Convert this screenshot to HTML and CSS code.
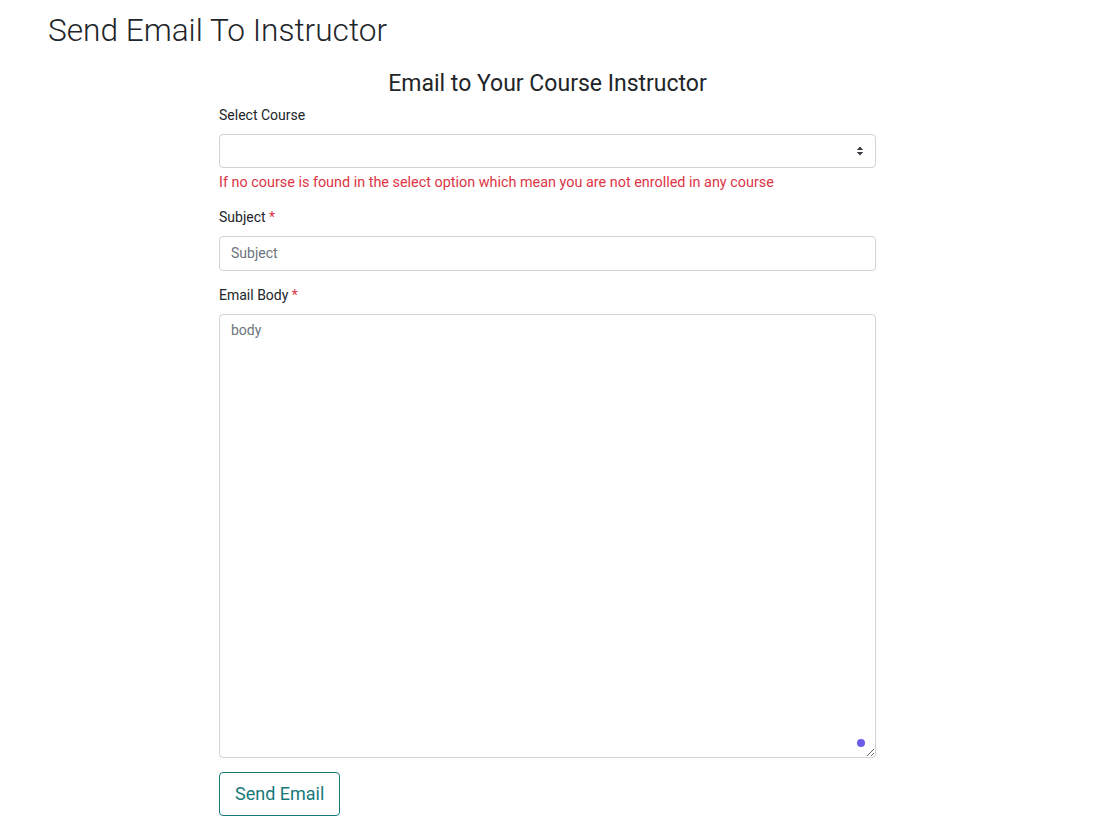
FILE: index.html
```html
<!DOCTYPE html>
<html lang="en">
<head>
<meta charset="utf-8">
<title>Send Email To Instructor</title>
<link rel="stylesheet" href="styles.css">
</head>
<body>
<div class="page">
  <h1 class="page-title">Send Email To Instructor</h1>
  <form class="email-form">
    <h2 class="form-title">Email to Your Course Instructor</h2>
    <div class="form-group form-group-course">
      <label class="form-label">Select Course</label>
      <div class="select-wrap">
        <select class="form-control select"></select>
        <svg class="select-arrow" width="8" height="10" viewBox="0 0 8 10"><path d="M4 0.5 L7.2 4 L0.8 4 Z M4 9.5 L7.2 6 L0.8 6 Z" fill="#343a40"/></svg>
      </div>
      <div class="error-text">If no course is found in the select option which mean you are not enrolled in any course</div>
    </div>
    <div class="form-group">
      <label class="form-label">Subject <span class="req">*</span></label>
      <input class="form-control" type="text" placeholder="Subject">
    </div>
    <div class="form-group">
      <label class="form-label">Email Body <span class="req">*</span></label>
      <div class="textarea-wrap">
        <textarea class="form-control textarea" placeholder="body"></textarea>
        <span class="ext-dot"></span>
      </div>
    </div>
    <button type="button" class="btn-send">Send Email</button>
  </form>
</div>
</body>
</html>
```

FILE: styles.css
```css
* { box-sizing: border-box; }
html, body { margin: 0; padding: 0; background: #fff; }
body {
  font-family: Roboto, "Noto Sans", "Liberation Sans", sans-serif;
  color: #212529;
  font-size: 14px;
  line-height: 1.5;
}
.page { padding: 12px 48px 0; }
.page-title {
  margin: 0;
  font-size: 31.6px;
  font-weight: 300;
  line-height: 1.2;
}
.email-form {
  width: 657px;
  margin: 20px 0 0 171px;
  display: flex;
  flex-direction: column;
}
.form-title {
  margin: 0 0 7px;
  font-size: 23px;
  font-weight: 400;
  line-height: 1.2;
  text-align: center;
}
.form-group {
  display: flex;
  flex-direction: column;
  margin-bottom: 14px;
}
.form-group-course { margin-bottom: 13px; }
.form-label {
  display: block;
  margin-bottom: 8px;
  font-size: 14px;
  line-height: 21px;
}
.req { color: #dc3545; }
.form-control {
  display: block;
  width: 100%;
  height: 35px;
  padding: 6px 11px;
  font-family: inherit;
  font-size: 14px;
  line-height: 21px;
  color: #495057;
  background: #fff;
  border: 1px solid #ced4da;
  border-radius: 4px;
  outline: none;
}
.form-control::placeholder { color: #6c757d; opacity: 1; }
.select-wrap { position: relative; }
.select {
  appearance: none;
  -webkit-appearance: none;
  height: 34px;
}
.select-arrow {
  position: absolute;
  right: 12px;
  top: 12px;
  pointer-events: none;
}
.error-text {
  margin-top: 4px;
  color: #dc3545;
  font-size: 14.4px;
  line-height: 22px;
}
.textarea-wrap { position: relative; }
.textarea {
  height: 444px;
  resize: vertical;
  padding-top: 5px;
}
.ext-dot {
  position: absolute;
  right: 11px;
  bottom: 11px;
  width: 8px;
  height: 8px;
  border-radius: 50%;
  background: #6c5ce7;
}
.btn-send {
  align-self: flex-start;
  height: 44px;
  padding: 8px 15px;
  font-family: inherit;
  font-size: 18px;
  line-height: 26px;
  color: #17797a;
  background: #fff;
  border: 1px solid #17797a;
  border-radius: 4px;
  cursor: pointer;
}
```
